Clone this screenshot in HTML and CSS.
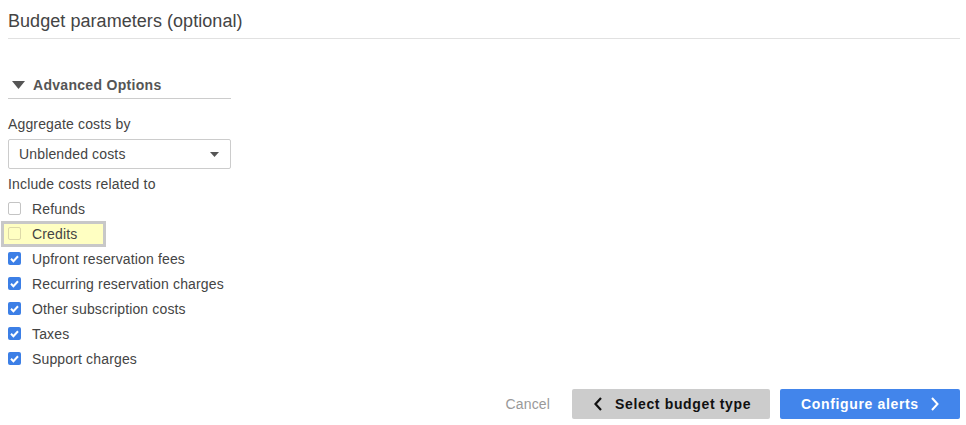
FILE: index.html
```html
<!DOCTYPE html>
<html>
<head>
<meta charset="utf-8">
<link rel="stylesheet" href="styles.css">
</head>
<body>
<div class="page">
  <h1 class="title">Budget parameters (optional)</h1>

  <section class="advanced">
    <div class="toggle">
      <svg class="caret" width="13" height="8" viewBox="0 0 13 8"><polygon points="0,0 13,0 6.5,8" fill="#555"/></svg>
      <span>Advanced Options</span>
    </div>

    <div class="field-label">Aggregate costs by</div>
    <div class="select">
      <span>Unblended costs</span>
      <svg class="select-arrow" width="9" height="5" viewBox="0 0 9 5"><polygon points="0,0 9,0 4.5,5" fill="#555"/></svg>
    </div>

    <div class="field-label second">Include costs related to</div>
    <div class="options">
      <div class="row"><span class="opt"><span class="cb"></span><span>Refunds</span></span></div>
      <div class="row"><span class="opt hl"><span class="cb"></span><span>Credits</span></span></div>
      <div class="row"><span class="opt"><span class="cb on"><svg width="13" height="13" viewBox="0 0 13 13"><polyline points="3,6.8 5.4,9.2 10,4.2" fill="none" stroke="#fff" stroke-width="2"/></svg></span><span>Upfront reservation fees</span></span></div>
      <div class="row"><span class="opt"><span class="cb on"><svg width="13" height="13" viewBox="0 0 13 13"><polyline points="3,6.8 5.4,9.2 10,4.2" fill="none" stroke="#fff" stroke-width="2"/></svg></span><span>Recurring reservation charges</span></span></div>
      <div class="row"><span class="opt"><span class="cb on"><svg width="13" height="13" viewBox="0 0 13 13"><polyline points="3,6.8 5.4,9.2 10,4.2" fill="none" stroke="#fff" stroke-width="2"/></svg></span><span>Other subscription costs</span></span></div>
      <div class="row"><span class="opt"><span class="cb on"><svg width="13" height="13" viewBox="0 0 13 13"><polyline points="3,6.8 5.4,9.2 10,4.2" fill="none" stroke="#fff" stroke-width="2"/></svg></span><span>Taxes</span></span></div>
      <div class="row"><span class="opt"><span class="cb on"><svg width="13" height="13" viewBox="0 0 13 13"><polyline points="3,6.8 5.4,9.2 10,4.2" fill="none" stroke="#fff" stroke-width="2"/></svg></span><span>Support charges</span></span></div>
    </div>
  </section>

  <div class="footer">
    <span class="cancel">Cancel</span>
    <button class="btn btn-grey">
      <svg width="8" height="14" viewBox="0 0 8 14"><polyline points="7,1 1.5,7 7,13" fill="none" stroke="#111" stroke-width="2.2"/></svg>
      <span>Select budget type</span>
    </button>
    <button class="btn btn-blue">
      <span>Configure alerts</span>
      <svg width="8" height="14" viewBox="0 0 8 14"><polyline points="1,1 6.5,7 1,13" fill="none" stroke="#fff" stroke-width="2"/></svg>
    </button>
  </div>
</div>
</body>
</html>
```

FILE: styles.css
```css
* { box-sizing: border-box; }
html, body { margin: 0; padding: 0; background: #fff; }
body {
  font-family: Arial, "Liberation Sans", sans-serif;
  font-size: 14px;
  letter-spacing: 0.15px;
  color: #444;
}
.page {
  padding: 0 6px 0 8px;
}
.title {
  margin: 0;
  padding: 9px 0 5px;
  font-size: 18px;
  font-weight: normal;
  line-height: 24px;
  letter-spacing: 0.05px;
  color: #444;
  border-bottom: 1px solid #e1e1e1;
}
.advanced {
  width: 223px;
}
.toggle {
  margin-top: 36px;
  height: 24px;
  padding-bottom: 4px;
  line-height: 20px;
  border-bottom: 1px solid #ccc;
  display: flex;
  align-items: center;
  font-weight: bold;
  letter-spacing: 0.3px;
  color: #555;
}
.caret {
  margin: 0 8px 0 4px;
}
.field-label {
  margin-top: 15px;
  line-height: 20px;
  color: #444;
}
.field-label.second {
  margin-top: 5px;
}
.select {
  margin-top: 5px;
  height: 30px;
  border: 1px solid #ccc;
  border-radius: 2px;
  padding: 0 10px 0 10px;
  display: flex;
  align-items: center;
  justify-content: space-between;
  color: #444;
}
.select-arrow {
  margin-right: 1px;
}
.options {
  margin-top: 2px;
}
.row {
  height: 25px;
  display: flex;
  align-items: center;
}
.opt {
  display: flex;
  align-items: center;
  height: 20px;
  color: #444;
}
.cb {
  width: 13px;
  height: 13px;
  border: 1px solid #c4c4c4;
  border-radius: 2px;
  background: #fff;
  margin-right: 11px;
  display: flex;
  flex: none;
}
.cb.on {
  border: none;
  background: #3c7fe6;
}
.opt.hl {
  margin-left: -4px;
  padding-left: 4px;
  width: 99px;
  height: 20px;
  background: #ffffc2;
  box-shadow: 0 0 0 3px #c8c8c8;
}
.opt.hl .cb {
  background: transparent;
  border-color: #ddd9a8;
}
.footer {
  margin-top: 18px;
  display: flex;
  justify-content: flex-end;
  align-items: center;
}
.cancel {
  color: #999;
  margin-right: 22px;
}
.btn {
  font-family: Arial, "Liberation Sans", sans-serif;
  font-size: 14px;
  font-weight: bold;
  letter-spacing: 0.65px;
  height: 30px;
  border: none;
  border-radius: 2px;
  display: flex;
  align-items: center;
  cursor: pointer;
}
.btn-grey {
  background: #cccccc;
  color: #111;
  width: 198px;
  padding: 0 0 0 22px;
  gap: 13px;
}
.btn-blue {
  background: #4285eb;
  color: #fff;
  width: 180px;
  margin-left: 10px;
  padding: 0 0 0 21px;
  gap: 12px;
}
```
